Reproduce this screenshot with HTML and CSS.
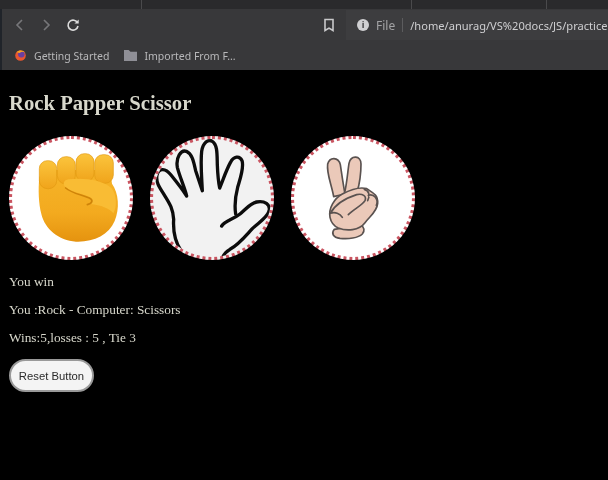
FILE: index.html
```html
<!DOCTYPE html>
<html lang="en">
  <head>
    <meta charset="UTF-8" />
    <title>Rock Papper Scissor</title>
    <link rel="stylesheet" href="styles.css">
  </head>

  <body>
    <!-- Browser chrome -->
    <header class="browser">
      <div class="tabstrip">
        <span class="tab first"></span>
        <span class="tab second"></span>
        <span class="tab third"></span>
      </div>
      <div class="toolbar">
        <svg class="nav-icon back" viewBox="0 0 16 16"><path d="M10 3 5 8l5 5" /></svg>
        <svg class="nav-icon forward" viewBox="0 0 16 16"><path d="m6 3 5 5-5 5" /></svg>
        <svg class="nav-icon reload" viewBox="0 0 16 16"><path d="M12.6 6A5 5 0 1 0 13 9" /><path class="solid" d="M9.5 6.5h4.2v-4z" /></svg>
        <svg class="bookmark" viewBox="0 0 12 14"><path d="M2 1.5h8v11l-4-2.4-4 2.4z" /></svg>
        <div class="urlbar">
          <span class="info">i</span>
          <span class="scheme">File</span>
          <span class="divider"></span>
          <span class="url">/home/anurag/VS%20docs/JS/practice</span>
        </div>
      </div>
      <div class="bookmarks">
        <span class="mark first">
          <svg viewBox="0 0 16 16">
            <circle cx="8" cy="8" r="6.5" fill="#e8562f" />
            <circle cx="9" cy="6.5" r="4" fill="#6a3fa0" />
            <path d="M3 4c3-3 9-3 11 1-2-2-5-2-7 0z" fill="#f5a623" />
          </svg>
          Getting Started
        </span>
        <span class="mark">
          <svg viewBox="0 0 16 14"><path d="M1 1h5l2 2h7v10H1z" fill="#8f8f96" /></svg>
          Imported From F...
        </span>
      </div>
    </header>

    <main class="game">
      <h1>Rock Papper Scissor</h1>

      <div class="choices">
        <!-- Rock -->
        <div class="choice">
          <svg viewBox="27 18 372 372">
            <defs>
              <linearGradient id="fist" x1="0" y1="0" x2="0" y2="1">
                <stop offset="0" stop-color="#f6b428" />
                <stop offset="0.6" stop-color="#f3aa1f" />
                <stop offset="1" stop-color="#e5930f" />
              </linearGradient>
              <linearGradient id="knuckle" x1="0" y1="0" x2="0" y2="1">
                <stop offset="0" stop-color="#fbc43c" />
                <stop offset="1" stop-color="#f0a41b" />
              </linearGradient>
            </defs>
            <path fill="url(#fist)" d="M118 140c-4 40-2 80 6 112 10 44 52 80 104 83 52 2 98-20 116-62 16-38 12-84-8-112L330 120H150z" />
            <rect class="finger" x="118" y="92" width="52" height="84" rx="24" />
            <rect class="finger" x="172" y="80" width="54" height="82" rx="25" />
            <rect class="finger" x="228" y="71" width="54" height="84" rx="25" />
            <rect class="finger" x="284" y="74" width="56" height="86" rx="25" />
            <path fill="#f9bc34" d="M205 148C250 142 310 150 335 175 350 195 352 230 340 250 330 235 300 225 272 222 282 212 276 203 262 198 240 190 215 186 197 172 186 162 192 150 205 148z" />
            <path fill="none" stroke="#cf8409" stroke-width="5" stroke-linecap="round" d="M197 174C215 190 245 194 268 204 280 210 278 220 262 224" />
          </svg>
        </div>

        <!-- Paper -->
        <div class="choice paper">
          <svg viewBox="15 18 372 372">
            <path class="hand-line" d="M108 362C90 335 84 300 86 268 84 232 70 215 55 190 42 170 32 155 36 135 42 112 62 115 78 135 95 156 112 178 125 198 120 175 104 140 97 112 92 82 108 58 124 64 142 72 146 96 152 122L172 182C170 140 166 100 170 64 174 38 190 26 202 34 218 44 216 75 217 105 218 130 220 155 224 174 234 150 244 120 256 98 266 78 284 76 291 92 298 112 286 145 278 172 272 195 268 225 272 252" />
            <path class="hand-line" d="M230 288C240 272 265 268 285 252 302 238 315 220 335 216 358 212 378 222 372 244 366 264 340 278 322 296 300 320 280 345 255 358 245 364 238 370 234 380" />
          </svg>
        </div>

        <!-- Scissors -->
        <div class="choice">
          <svg viewBox="18 18 372 372">
            <g class="peace">
              <path d="M146 200C140 165 124 130 128 102 134 80 160 80 166 104 170 130 174 160 180 192z" />
              <path d="M178 192C186 160 188 125 192 100 198 74 228 76 228 102 228 130 224 160 216 188z" />
              <path d="M148 298C138 310 144 322 165 325 190 328 220 324 232 312 240 302 238 292 228 285z" />
              <path d="M135 262C130 235 148 205 172 192 195 180 225 170 245 176 258 186 280 192 278 220 276 245 255 258 240 278 222 302 185 304 160 294 146 288 138 276 135 262z" />
              <path d="M172 262C165 250 150 245 136 250 150 225 180 205 215 194 232 190 246 198 240 212 232 226 205 238 190 254" />
              <path d="M238 178C252 182 256 196 248 212" />
              <path d="M250 196C266 190 282 208 274 226" />
            </g>
          </svg>
        </div>
      </div>

      <p>You win</p>
      <p>You :Rock - Computer: Scissors</p>
      <p>Wins:5,losses : 5 , Tie 3</p>
      <button class="reset">Reset Button</button>
    </main>
  </body>
</html>
```

FILE: styles.css
```css
/* Global Styles */
html,
body {
  margin: 0;
  padding: 0;
  height: 100%;
  background-color: #000;
  overflow: hidden;
}

/* Browser chrome */
.browser {
  background-color: #38383a;
  color: #b8b8ba;
  font-family: 'Noto Sans', sans-serif;
  box-shadow: inset 2px 0 0 #20242a;
  filter: blur(0.5px);
}

.tabstrip {
  display: grid;
  grid-template-columns: 142px 270px 135px;
  height: 9px;
  background-color: #2a2a2c;
}

.tab {
  border-right: 1px solid #4a4a4c;
}

.toolbar {
  display: flex;
  align-items: center;
  height: 32px;
  padding-left: 12px;
}

.toolbar svg {
  flex-shrink: 0;
}

.nav-icon {
  width: 16px;
  height: 16px;
  margin-right: 10px;
  fill: none;
  stroke: #77777a;
  stroke-width: 1.6;
}

.nav-icon.reload {
  stroke: #dcdcdc;
  margin-left: 1px;
}

.nav-icon .solid {
  fill: #dcdcdc;
  stroke: none;
}

.bookmark {
  width: 12px;
  height: 14px;
  margin-left: 232px;
  fill: none;
  stroke: #c9c9cb;
  stroke-width: 1.6;
}

.urlbar {
  display: flex;
  align-items: center;
  flex: 1;
  min-width: 0;
  height: 30px;
  margin-left: 11px;
  padding-left: 10px;
  background-color: #3d3d3f;
  font-size: 11.1px;
  white-space: nowrap;
}

.info {
  width: 12px;
  height: 12px;
  margin-left: 1px;
  border-radius: 50%;
  background-color: #d0d0d2;
  color: #3e3e40;
  font-size: 9px;
  font-weight: bold;
  line-height: 12px;
  text-align: center;
}

.scheme {
  margin-left: 7px;
  font-size: 12px;
  color: #a3a3a5;
}

.divider {
  width: 1px;
  height: 14px;
  margin: 0 7px;
  background-color: #5c5c5e;
}

.url {
  color: #cfcfd1;
}

.bookmarks {
  display: flex;
  align-items: center;
  height: 29px;
  padding-left: 13px;
  font-size: 10.5px;
}

.mark {
  display: flex;
  align-items: center;
  gap: 6px;
  margin-right: 14px;
}

.mark svg {
  width: 15px;
  height: 13px;
}

/* Game */
.game {
  padding: 20px 9px 0;
  color: #d8d8cc;
  font-family: 'Liberation Serif', serif;
  font-size: 13.3px;
  filter: blur(0.4px);
}

.game h1 {
  margin: 0 0 19px;
  font-size: 20.7px;
  line-height: 27px;
}

.choices {
  display: flex;
  gap: 17px;
  margin-bottom: 14px;
}

.choice {
  box-sizing: border-box;
  width: 124px;
  height: 124px;
  border: 3px dotted #c95460;
  border-radius: 50%;
  background-color: #fff;
  overflow: hidden;
}

.choice.paper {
  background-color: #f2f2f2;
}

.choice svg {
  display: block;
  width: 124px;
  height: 124px;
  margin: -3px;
}

.finger {
  fill: url(#knuckle);
  stroke: #e39a12;
  stroke-width: 2;
}

.hand-line {
  fill: none;
  stroke: #0c0c0c;
  stroke-width: 10;
  stroke-linecap: round;
  stroke-linejoin: round;
}

.peace path {
  fill: #ebc9b9;
  stroke: #5a5250;
  stroke-width: 5;
  stroke-linecap: round;
  stroke-linejoin: round;
}

.game p {
  margin: 0 0 12px;
  line-height: 16px;
}

.reset {
  display: block;
  width: 85px;
  height: 33px;
  margin-top: 13px;
  padding: 0;
  border: 2px solid #999;
  border-radius: 17px;
  background-color: #f4f4f4;
  color: #2a2a2a;
  font-family: 'Liberation Sans', sans-serif;
  font-size: 11.3px;
}
```
